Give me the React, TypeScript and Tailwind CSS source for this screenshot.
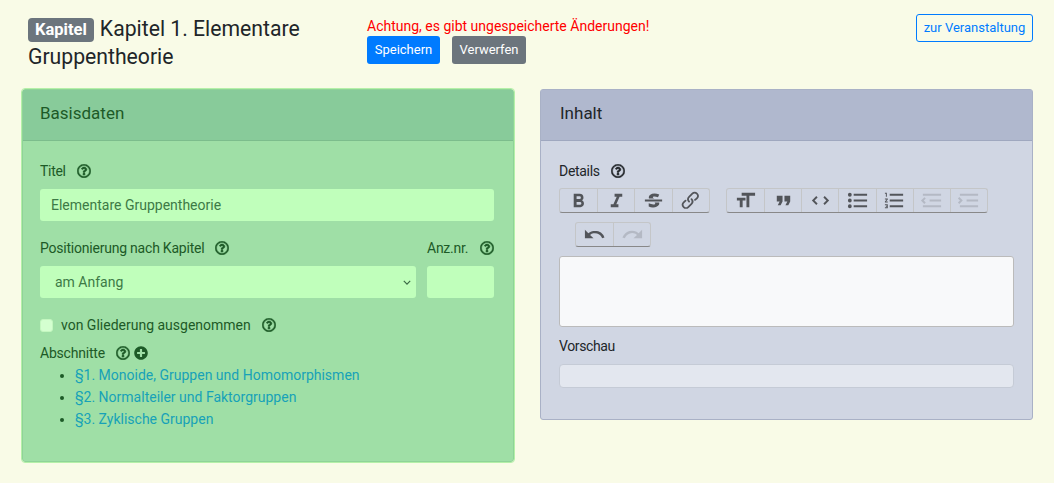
import { FaRegQuestionCircle, FaPlusCircle } from "react-icons/fa";

const ICONS = {
  bold: "M15.6 11.8c1-.7 1.6-1.8 1.6-2.8a4 4 0 0 0-4-4H7v14h7c2.1 0 3.7-1.7 3.7-3.8 0-1.5-.8-2.8-2.1-3.4zM10 7.5h3a1.5 1.5 0 1 1 0 3h-3v-3zm3.5 9H10v-3h3.5a1.5 1.5 0 1 1 0 3z",
  italic: "M10 5v3h2.2l-3.4 8H6v3h8v-3h-2.2l3.4-8H18V5h-8z",
  strike:
    "M12.73 14l.28.14c.26.15.45.3.57.44.12.14.18.3.18.5 0 .3-.15.56-.44.75-.3.2-.76.3-1.39.3A13.52 13.52 0 0 1 7 14.95v3.37a10.64 10.64 0 0 0 4.84.88c1.26 0 2.35-.19 3.28-.56.93-.37 1.64-.9 2.14-1.57s.74-1.45.74-2.32c0-.26-.02-.51-.06-.75h-5.21zm-5.5-4c-.08-.34-.12-.7-.12-1.1 0-1.29.52-2.3 1.58-3.02 1.05-.72 2.5-1.08 4.34-1.08 1.62 0 3.28.34 4.97 1l-1.3 2.93c-1.47-.6-2.73-.9-3.8-.9-.55 0-.96.08-1.2.26-.26.17-.38.38-.38.64 0 .27.16.52.48.74.17.12.53.3 1.05.53H7.23zM3 13h18v-2H3v2z",
  link: "M9.88 13.7a4.3 4.3 0 0 1 0-6.07l3.37-3.37a4.26 4.26 0 0 1 6.07 0 4.3 4.3 0 0 1 0 6.06l-1.96 1.72a.91.91 0 1 1-1.3-1.3l1.97-1.71a2.46 2.46 0 0 0-3.48-3.48l-3.38 3.37a2.46 2.46 0 0 0 0 3.48.91.91 0 1 1-1.3 1.3z M4.25 19.46a4.3 4.3 0 0 1 0-6.07l1.93-1.9a.91.91 0 1 1 1.3 1.3l-1.93 1.9a2.46 2.46 0 0 0 3.48 3.48l3.37-3.38c.96-.96.96-2.52 0-3.48a.91.91 0 1 1 1.3-1.3 4.3 4.3 0 0 1 0 6.07l-3.38 3.38a4.26 4.26 0 0 1-6.07 0z",
  heading: "M12 9v3H9v7H6v-7H3V9h9zM8 4h14v3h-6v12h-3V7H8V4z",
  quote: "M6 17h3l2-4V7H5v6h3zm8 0h3l2-4V7h-6v6h3z",
  code: "M18.2 12L15 15.2l1.4 1.4L21 12l-4.6-4.6L15 8.8l3.2 3.2zM5.8 12L9 8.8 7.6 7.4 3 12l4.6 4.6L9 15.2 5.8 12z",
  bullets: "M4 4a2 2 0 1 0 0 4 2 2 0 0 0 0-4zm0 6a2 2 0 1 0 0 4 2 2 0 0 0 0-4zm0 6a2 2 0 1 0 0 4 2 2 0 0 0 0-4zm4 3h14v-2H8v2zm0-6h14v-2H8v2zm0-8v2h14V5H8z",
  numbers: "M2 17h2v.5H3v1h1v.5H2v1h3v-4H2v1zm1-9h1V4H2v1h1v3zm-1 3h1.8L2 13.1v.9h3v-1H3.2L5 10.9V10H2v1zm5-6v2h14V5H7zm0 14h14v-2H7v2zm0-6h14v-2H7v2z",
  decrease: "M3 19h19v-2H3v2zm7-6h12v-2H10v2zm-8.3-.3l2.8 2.9L6 14.2 4 12l2-2-1.4-1.5L1 12l.7.7zM3 5v2h19V5H3z",
  increase: "M3 19h19v-2H3v2zm7-6h12v-2H10v2zm-6.9-1L1 14.2l1.4 1.4L6 12l-.7-.7-2.9-2.9L1 9.8 3.1 12zM3 5v2h19V5H3z",
  undo: "M12.5 8c-2.6 0-5 1-6.9 2.6L2 7v9h9l-3.6-3.6A8 8 0 0 1 20 16l2.4-.8a10.5 10.5 0 0 0-10-7.2z",
  redo: "M18.4 10.6a10.5 10.5 0 0 0-16.9 4.6L4 16a8 8 0 0 1 12.7-3.6L13 16h9V7l-3.6 3.6z",
};

type IconName = keyof typeof ICONS;

function ToolGroup({ items, className = "" }: { items: { icon: IconName; off?: boolean }[]; className?: string }) {
  return (
    <div className={"flex h-[25px] rounded-[3px] border border-[#c4c6c8] border-b-[#888] " + className}>
      {items.map((it, i) => (
        <div
          key={it.icon}
          className={"flex w-[37.2px] shrink-0 items-center justify-center " + (i > 0 ? "border-l border-[#c4c6c8]" : "")}
        >
          <svg viewBox="0 0 24 24" className={"h-[23px] w-[23px] " + (it.off ? "opacity-[0.13]" : "opacity-60")}>
            <path d={ICONS[it.icon]} fill="#000" />
          </svg>
        </div>
      ))}
    </div>
  );
}

function Help({ className = "" }: { className?: string }) {
  return (
    <FaRegQuestionCircle
      stroke="currentColor"
      strokeWidth={18}
      className={"inline-block h-[14px] w-[14px] shrink-0 " + className}
    />
  );
}

export default function App() {
  return (
    <div
      className="min-h-[483px] bg-[#f9fbe7] text-[14px] text-[#212529]"
      style={{ fontFamily: 'Roboto, "Noto Sans", sans-serif' }}
    >
      <div className="flex h-[89px] items-start pl-[28px] pr-[21px]">
        <div className="mt-[15px] w-[339px] pr-[20px] text-[21.2px] leading-[28px]">
          <span className="mr-[6px] inline-block rounded-[4px] bg-[#6c757d] px-[7px] align-[1px] text-[16.5px] font-bold leading-[24px] text-white">
            Kapitel
          </span>
          Kapitel 1. Elementare Gruppentheorie
        </div>
        <div className="mt-[16px]">
          <div className="h-[20px] leading-[20px] text-[#ff0000]">Achtung, es gibt ungespeicherte Änderungen!</div>
          <div className="flex gap-[12px]">
            <button className="h-[28px] w-[73px] rounded-[3px] bg-[#007bff] text-[13px] text-white">Speichern</button>
            <button className="h-[28px] w-[74px] rounded-[3px] bg-[#6c757d] text-[13px] text-white">Verwerfen</button>
          </div>
        </div>
        <button className="mt-[14px] ml-auto h-[28px] w-[117px] rounded-[3px] border border-[#007bff] text-[13px] text-[#007bff]">
          zur Veranstaltung
        </button>
      </div>

      <div className="flex items-start gap-[26px] pl-[21px] pr-[21px]">
        <section className="ml-[1px] h-[373px] w-[492px] rounded-[3px] border border-[#8fd398] bg-[#9fdfa6] text-[#1d5a27] outline outline-[#b5f0a8]">
          <h2 className="flex h-[51px] items-center border-b border-[#7cbd8c] bg-[#88cb9a] px-[17px] pb-[3px] text-[17px]">Basisdaten</h2>
          <div className="px-[17px] pt-[20px]">
            <div className="flex h-[20px] items-center gap-[11px] tracking-[-0.3px]">
              Titel <Help />
            </div>
            <input
              readOnly
              value="Elementare Gruppentheorie"
              className="mt-[8px] block h-[32px] w-[454px] rounded-[3px] bg-[#c0ffbb] px-[11px] text-[#3d7a46] outline-none"
            />
            <div className="mt-[17px] flex gap-[11px]">
              <div className="w-[376px]">
                <div className="flex h-[20px] items-center gap-[11px] tracking-[-0.22px]">
                  Positionierung nach Kapitel <Help />
                </div>
                <div className="relative mt-[8px] flex h-[32px] items-center rounded-[3px] bg-[#c0ffbb] px-[15px] text-[#3d7a46]">
                  am Anfang
                  <svg viewBox="0 0 10 6" className="absolute right-[5px] top-[14px] h-[5px] w-[8px]">
                    <path d="M1 1l4 4 4-4" fill="none" stroke="#3a6a45" strokeWidth="1.5" />
                  </svg>
                </div>
              </div>
              <div className="w-[67px]">
                <div className="flex h-[20px] items-center justify-between tracking-[-0.25px]">
                  Anz.nr. <Help />
                </div>
                <div className="mt-[8px] h-[32px] rounded-[3px] bg-[#c0ffbb]" />
              </div>
            </div>
            <div className="mt-[17px] flex h-[20px] items-center">
              <span className="h-[13px] w-[13px] shrink-0 rounded-[3px] border border-[#c4f7c0] bg-[#d4ffd0]" />
              <span className="ml-[8px]">von Gliederung ausgenommen</span>
              <Help className="ml-[11px]" />
            </div>
            <div className="mt-[8px] flex h-[20px] items-center tracking-[-0.2px]">
              Abschnitte
              <Help className="ml-[11px]" />
              <FaPlusCircle className="ml-[4px] h-[14px] w-[14px]" />
            </div>
            <ul className="mt-[1px] list-disc pl-[35px] marker:text-[#1d5a27]">
              <li className="h-[22px] leading-[22px] text-[#17a2b8]">§1. Monoide, Gruppen und Homomorphismen</li>
              <li className="h-[22px] leading-[22px] text-[#17a2b8]">§2. Normalteiler und Faktorgruppen</li>
              <li className="h-[22px] leading-[22px] text-[#17a2b8]">§3. Zyklische Gruppen</li>
            </ul>
          </div>
        </section>

        <section className="h-[331px] w-[493px] rounded-[3px] border border-[#a9b1c6] bg-[#d0d6e3]">
          <h2 className="flex h-[51px] items-center border-b border-[#9fa8bf] bg-[#b0b8ce] px-[19px] pb-[3px] text-[17px]">Inhalt</h2>
          <div className="px-[18px] pt-[20px]">
            <div className="flex h-[20px] items-center gap-[11px] tracking-[-0.3px]">
              Details <Help />
            </div>
            <div className="mt-[7px] flex w-[455px] flex-wrap gap-y-[9px]">
              <ToolGroup items={[{ icon: "bold" }, { icon: "italic" }, { icon: "strike" }, { icon: "link" }]} />
              <ToolGroup
                className="ml-[16px]"
                items={[
                  { icon: "heading" },
                  { icon: "quote" },
                  { icon: "code" },
                  { icon: "bullets" },
                  { icon: "numbers" },
                  { icon: "decrease", off: true },
                  { icon: "increase", off: true },
                ]}
              />
              <ToolGroup className="ml-[16px]" items={[{ icon: "undo" }, { icon: "redo", off: true }]} />
            </div>
            <div className="mt-[9px] h-[71px] w-[455px] rounded-[3px] border border-[#bbb] bg-[#f8f9fa]" />
            <div className="mt-[9px] h-[20px] leading-[20px] tracking-[-0.4px]">Vorschau</div>
            <div className="mt-[8px] h-[24px] w-[455px] rounded-[4px] border border-[#c5cbd6] bg-[#e3e7ef]" />
          </div>
        </section>
      </div>
    </div>
  );
}
